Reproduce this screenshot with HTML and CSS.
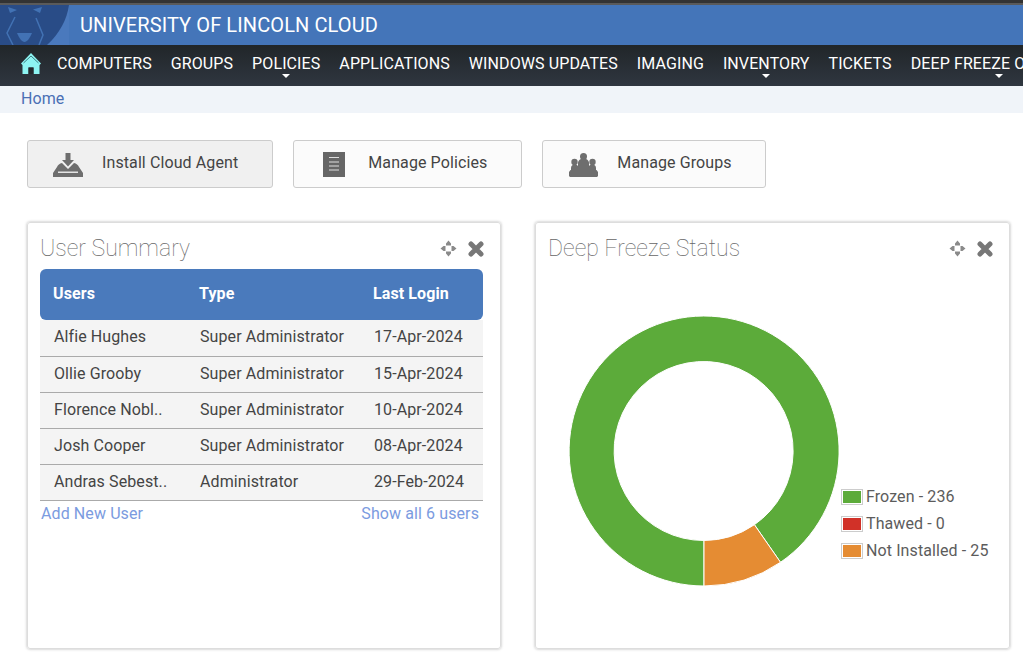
FILE: index.html
```html
<!DOCTYPE html>
<html>
    <head>
        <title>University of Lincoln Cloud</title>
        <link rel="stylesheet" href="styles.css">
    </head>
    <body>
        <div class="top-strip"></div>
        <header class="brand-bar">
            <svg class="logo" viewBox="0 0 69 40" width="69" height="40">
                <rect width="69" height="40" fill="#4a79bd"/>
                <path d="M0 0H69C67 14 60 28 47 40H0Z" fill="#294c87"/>
                <path d="M8 2L17 5L10 8Z" fill="#4272b4"/>
                <path d="M42 2L33 4.500L40 8Z" fill="#4272b4"/>
                <path d="M15 12L7 28L13 40" fill="none" stroke="#4272b4" stroke-width="1.500"/>
                <path d="M36 13L43 30L39 40" fill="none" stroke="#4272b4" stroke-width="1.500"/>
                <path d="M17 28H32C30 33 27 37 24.500 37C22 37 19 33 17 28Z" fill="#4272b4"/>
            </svg>
            <h1 class="brand-title">UNIVERSITY OF LINCOLN CLOUD</h1>
        </header>
        <nav class="main-nav">
            <a class="nav-home">
                <svg viewBox="0 0 20 21" width="20" height="21">
                    <path d="M10 0L20 10.500L18.500 12V21H12.500V14.500H7.500V21H1.500V12L0 10.500Z" fill="#8df4f2"/>
                    <path d="M2.500 10L10 3L17.500 10" fill="none" stroke="#3f7f85" stroke-width="1"/>
                    <rect x="7.500" y="14.500" width="5" height="7" fill="#23282c"/>
                </svg>
            </a>
            <a class="nav-item">COMPUTERS</a>
            <a class="nav-item">GROUPS</a>
            <a class="nav-item has-menu">POLICIES</a>
            <a class="nav-item">APPLICATIONS</a>
            <a class="nav-item">WINDOWS UPDATES</a>
            <a class="nav-item">IMAGING</a>
            <a class="nav-item has-menu">INVENTORY</a>
            <a class="nav-item">TICKETS</a>
            <a class="nav-item has-menu nav-last">DEEP FREEZE O</a>
        </nav>
        <div class="breadcrumb"><a>Home</a></div>

        <main class="content">
            <div class="actions">
                <a class="action-btn action-active">
                    <span class="action-icon">
                        <svg viewBox="0 0 30 24" width="30" height="24">
                            <path d="M12.500 0H17.500V7H21L15 13.500L9 7H12.500Z" fill="#6e6e6e"/>
                            <path d="M9 10L15 16L21 10C23.500 10.500 25 12 26 14L30 20V24H0V20L4 14C5 12 6.500 10.500 9 10Z" fill="#6e6e6e"/>
                            <rect x="5" y="18.500" width="20" height="1.500" fill="#e4e4e4"/>
                        </svg>
                    </span>
                    <span class="action-label">Install Cloud Agent</span>
                </a>
                <a class="action-btn">
                    <span class="action-icon">
                        <svg viewBox="0 0 22 25" width="22" height="25">
                            <rect width="22" height="25" fill="#666"/>
                            <path d="M6 5.500H16M6 10H16M6 14H16M6 18H16" stroke="#ddd" stroke-width="1.200"/>
                        </svg>
                    </span>
                    <span class="action-label">Manage Policies</span>
                </a>
                <a class="action-btn action-last">
                    <span class="action-icon">
                        <svg viewBox="0 0 29 24" width="29" height="24">
                            <g fill="#6e6e6e">
                                <circle cx="14.500" cy="3.500" r="3.500"/>
                                <path d="M9 10C9 7.500 11.500 5.500 14.500 5.500S20 7.500 20 10V18H9Z"/>
                                <circle cx="5.500" cy="9" r="3.200"/>
                                <circle cx="23.500" cy="9" r="3.200"/>
                                <path d="M2 15C2 13 3.500 11.500 5.500 11.500S10 13 10 15V18H2Z"/>
                                <path d="M19 15C19 13 21.500 11.500 23.500 11.500S27 13 27 15V18H19Z"/>
                                <path d="M1.500 17H27.500L29 19V23L28 24H1L0 23V19Z"/>
                            </g>
                        </svg>
                    </span>
                    <span class="action-label">Manage Groups</span>
                </a>
            </div>

            <div class="panels">
                <section class="panel">
                    <div class="panel-head">
                        <h2 class="panel-title">User Summary</h2>
                        <div class="panel-tools">
                            <svg viewBox="0 0 17 17" width="17" height="17">
                                <path d="M8.500 0.500L11 3.500V5.500H6V3.500ZM8.500 16.500L6 13.500V11.500H11V13.500ZM0.500 8.500L3.500 6H5.500V11H3.500ZM16.500 8.500L13.500 11H11.500V6H13.500Z" fill="#8a8a8a"/>
                            </svg>
                            <svg viewBox="0 0 16 16" width="16" height="16">
                                <path d="M3 3L13 13M13 3L3 13" stroke="#777" stroke-width="5" stroke-linecap="round"/>
                            </svg>
                        </div>
                    </div>
                    <table class="user-table">
                        <thead>
                            <tr><th class="col-user">Users</th><th class="col-type">Type</th><th>Last Login</th></tr>
                        </thead>
                        <tbody>
                            <tr><td>Alfie Hughes</td><td>Super Administrator</td><td>17-Apr-2024</td></tr>
                            <tr><td>Ollie Grooby</td><td>Super Administrator</td><td>15-Apr-2024</td></tr>
                            <tr><td>Florence Nobl..</td><td>Super Administrator</td><td>10-Apr-2024</td></tr>
                            <tr><td>Josh Cooper</td><td>Super Administrator</td><td>08-Apr-2024</td></tr>
                            <tr><td>Andras Sebest..</td><td>Administrator</td><td>29-Feb-2024</td></tr>
                        </tbody>
                    </table>
                    <div class="table-links">
                        <a>Add New User</a>
                        <a>Show all 6 users</a>
                    </div>
                </section>

                <section class="panel panel-wide">
                    <div class="panel-head">
                        <h2 class="panel-title">Deep Freeze Status</h2>
                        <div class="panel-tools">
                            <svg viewBox="0 0 17 17" width="17" height="17">
                                <path d="M8.500 0.500L11 3.500V5.500H6V3.500ZM8.500 16.500L6 13.500V11.500H11V13.500ZM0.500 8.500L3.500 6H5.500V11H3.500ZM16.500 8.500L13.500 11H11.500V6H13.500Z" fill="#8a8a8a"/>
                            </svg>
                            <svg viewBox="0 0 16 16" width="16" height="16">
                                <path d="M3 3L13 13M13 3L3 13" stroke="#777" stroke-width="5" stroke-linecap="round"/>
                            </svg>
                        </div>
                    </div>
                    <div class="chart">
                        <svg class="donut" viewBox="0 0 270 270" width="270" height="270">
                            <path d="M135 270A135 135 0 1 1 211.500 246.300L185.400 208.700A89.500 89.500 0 1 0 135 224.500Z" fill="#5cab3a" stroke="#fff" stroke-width="1"/>
                            <path d="M135 270A135 135 0 0 0 211.500 246.300L185.400 208.700A89.500 89.500 0 0 1 135 224.500Z" fill="#e58c33" stroke="#fff" stroke-width="1"/>
                        </svg>
                        <ul class="legend">
                            <li><span class="swatch swatch-green"></span>Frozen - 236</li>
                            <li><span class="swatch swatch-red"></span>Thawed - 0</li>
                            <li><span class="swatch swatch-orange"></span>Not Installed - 25</li>
                        </ul>
                    </div>
                </section>
            </div>
        </main>
    </body>
</html>
```

FILE: styles.css
```css
html, body {
    margin: 0;
    height: 663px;
    overflow: hidden;
}

body {
    font-family: Roboto, "Liberation Sans", sans-serif;
    font-size: 16px;
    letter-spacing: 0.1px;
    color: #444;
    background-color: #fff;
}

.top-strip {
    height: 3px;
    background-color: #333;
    border-bottom: 2px solid #5a5a5a;
}

.brand-bar {
    display: flex;
    align-items: center;
    height: 40px;
    background-color: #4475b9;
}

.logo {
    display: block;
    flex: none;
}

.brand-title {
    margin: 0 0 0 11px;
    font-size: 20px;
    font-weight: 400;
    color: #fff;
}

.main-nav {
    display: flex;
    align-items: center;
    height: 41px;
    padding-left: 21px;
    overflow: hidden;
    background: linear-gradient(#212629, #2f3640);
    white-space: nowrap;
}

.nav-home {
    display: flex;
    margin-right: 16px;
    padding-bottom: 4px;
}

.nav-item {
    position: relative;
    margin-right: 19px;
    padding-bottom: 4px;
    color: #fff;
}

/* little arrow under the items with a dropdown */
.has-menu::after {
    content: "";
    position: absolute;
    left: 50%;
    bottom: -1px;
    margin-left: -4px;
    border-left: 4px solid transparent;
    border-right: 4px solid transparent;
    border-top: 4px solid #fff;
}

.nav-last {
    flex: none;
    width: 176px;
    margin-right: 0;
}

.breadcrumb {
    height: 27px;
    padding-left: 21px;
    line-height: 26px;
    color: #4a6fb5;
    background-color: #f0f4f9;
}

.content {
    padding: 27px 13px 0 27px;
}

.actions {
    display: flex;
    gap: 20px;
    margin-bottom: 34px;
}

.action-btn {
    display: flex;
    align-items: center;
    height: 46px;
    padding: 0 34px 0 6px;
    border: 1px solid #ccc;
    border-radius: 3px;
    background-color: #fbfbfb;
}

.action-active {
    background-color: #f0f0f0;
}

.action-last {
    padding-right: 33px;
}

.action-icon {
    display: flex;
    justify-content: center;
    width: 68px;
    margin-top: 1px;
}

.action-label {
    margin-bottom: 4px;
}

.panels {
    display: flex;
    gap: 34px;
}

.panel {
    box-sizing: border-box;
    width: 474px;
    height: 427px;
    padding: 0 17px 0 13px;
    border: 1px solid #ddd;
    border-radius: 3px;
    box-shadow: 0 0 3px rgba(0, 0, 0, 0.3);
}

.panel-wide {
    width: 475px;
}

.panel-head {
    display: flex;
    align-items: center;
    justify-content: space-between;
    height: 46px;
    padding-top: 5px;
    box-sizing: border-box;
}

.panel-title {
    margin: 0 0 0 -1px;
    font-size: 23px;
    font-weight: 100;
    letter-spacing: 0;
    color: #666;
}

.panel-tools {
    display: flex;
    align-items: center;
    gap: 11px;
    margin-right: -1px;
}

.user-table {
    width: 443px;
    margin-left: -1px;
    border-spacing: 0;
    table-layout: fixed;
}

.user-table th {
    box-sizing: border-box;
    height: 51px;
    padding: 0 0 2px 13px;
    text-align: left;
    font-weight: 700;
    color: #fff;
    background-color: #4a7abc;
}

.user-table th:first-child {
    border-radius: 6px 0 0 6px;
}

.user-table th:last-child {
    border-radius: 0 6px 6px 0;
}

.col-user {
    width: 146px;
}

.col-type {
    width: 174px;
}

.user-table td {
    box-sizing: border-box;
    height: 36px;
    padding: 0 0 2px 14px;
    background-color: #f4f4f4;
    border-bottom: 1px solid #aaa;
}

/* the first row is a pixel taller, text stays high */
.user-table tbody tr:first-child td {
    height: 37px;
    padding-bottom: 4px;
}

.table-links {
    display: flex;
    justify-content: space-between;
    width: 438px;
    margin-top: 3px;
    line-height: 19px;
    color: #7b9be0;
}

.chart {
    display: flex;
    padding-left: 20px;
}

.donut {
    display: block;
    margin-top: 47px;
}

.legend {
    margin: 214px 0 0 2px;
    padding: 0;
    list-style: none;
    color: #5c5c5c;
    white-space: nowrap;
}

.legend li {
    display: flex;
    align-items: center;
    height: 27px;
}

.swatch {
    box-sizing: border-box;
    width: 22px;
    height: 16px;
    margin-right: 3px;
    padding: 1px;
    border: 1px solid #ccc;
    background-clip: content-box;
}

.swatch-green {
    background-color: #5cab3a;
}

.swatch-red {
    background-color: #d13128;
}

.swatch-orange {
    background-color: #e58c33;
}
```
